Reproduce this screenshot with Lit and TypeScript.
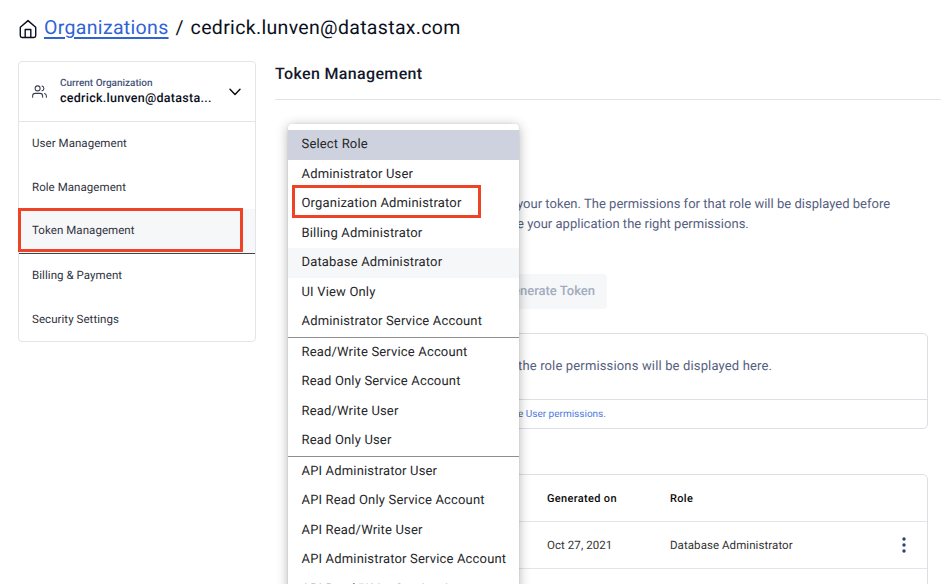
import { LitElement, html, css } from "lit";
import { customElement } from "lit/decorators.js";
import { classMap } from "lit/directives/class-map.js";

@customElement("org-sidebar")
class OrgSidebar extends LitElement {
  static styles = css`
    :host { display: block; width: 238px; flex: none; }
    .card { box-sizing: border-box; width: 238px; height: 281px; border: 1px solid #e2e4e7; border-radius: 4px; }
    .org { display: flex; align-items: center; box-sizing: border-box; height: 60px; padding: 0 13px 0 13px; border-bottom: 1px solid #e2e4e7; }
    .org svg { flex: none; }
    .names { width: 153px; margin: 0 15px 0 13px; white-space: nowrap; }
    .label { font-size: 10px; line-height: 14px; font-weight: 500; letter-spacing: -0.02px; color: #46547a; }
    .name { font-size: 12.5px; line-height: 15px; font-weight: 500; letter-spacing: 0.27px; color: #0a0f20; }
    .item { position: relative; box-sizing: border-box; height: 43.5px; line-height: 43.5px; padding-left: 13px; font-size: 11.5px; letter-spacing: 0.06px; color: #2f3340; }
    .active { height: 45px; background: #f6f7f9; border-bottom: 1.5px solid #43444a; }
    .mark { position: absolute; left: -1px; top: -1px; box-sizing: border-box; width: 225px; height: 44px; border: 3px solid #ee4326; }
  `;
  items = ["User Management", "Role Management", "Token Management", "Billing & Payment", "Security Settings"];
  render() {
    return html`<div class="card">
      <div class="org">
        <svg width="15" height="15" viewBox="0 0 24 24" fill="none" stroke="#3a3f50" stroke-width="1.7" stroke-linecap="round" stroke-linejoin="round">
          <path d="M17 21v-2a4 4 0 0 0-4-4H5a4 4 0 0 0-4 4v2M23 21v-2a4 4 0 0 0-3-3.87M16 3.13a4 4 0 0 1 0 7.75" /><circle cx="9" cy="7" r="4" />
        </svg>
        <div class="names">
          <div class="label">Current Organization</div>
          <div class="name">cedrick.lunven@datasta...</div>
        </div>
        <svg width="14" height="10" viewBox="0 0 14 10" fill="none" stroke="#111" stroke-width="1.5" stroke-linecap="round" stroke-linejoin="round"><path d="M2 2.2 7 7.4l5-5.2" /></svg>
      </div>
      ${this.items.map((t, i) => html`<div class=${classMap({ item: true, active: i === 2 })}>${t}${i === 2 ? html`<div class="mark"></div>` : ""}</div>`)}
    </div>`;
  }
}

@customElement("role-menu")
class RoleMenu extends LitElement {
  static styles = css`
    :host { display: block; box-sizing: border-box; width: 231px; height: 480px; padding-top: 6px; background: #fff; border-radius: 4px; box-shadow: 0 2px 12px rgba(0, 0, 0, 0.3), 0 0 2px rgba(0, 0, 0, 0.1); }
    .item { position: relative; height: 29.5px; line-height: 30.5px; padding-left: 13.5px; font-size: 13px; letter-spacing: 0.17px; color: #26272a; white-space: nowrap; }
    .selected { background: #ced2de; }
    .hover { background: #f6f7f9; }
    .divider { height: 1px; background: #8f8f90; }
    .mark { position: absolute; left: 4px; top: -4px; box-sizing: border-box; width: 189px; height: 33px; border: 3px solid #ee4326; }
  `;
  groups = [
    ["Select Role", "Administrator User", "Organization Administrator", "Billing Administrator", "Database Administrator", "UI View Only", "Administrator Service Account"],
    ["Read/Write Service Account", "Read Only Service Account", "Read/Write User", "Read Only User"],
    ["API Administrator User", "API Read Only Service Account", "API Read/Write User", "API Administrator Service Account", "API Read/Write Service Account"],
  ];
  render() {
    return this.groups.map((g, n) => html`${n ? html`<div class="divider"></div>` : ""}${g.map((t, i) => html`<div
      class=${classMap({ item: true, selected: n === 0 && i === 0, hover: n === 0 && i === 4 })}>${t}${n === 0 && i === 2 ? html`<div class="mark"></div>` : ""}</div>`)}`);
  }
}

@customElement("app-root")
class AppRoot extends LitElement {
  static styles = css`
    :host { display: flex; flex-direction: column; position: relative; width: 950px; height: 584px; overflow: hidden; background: #fff; font-family: Roboto, "Liberation Sans", sans-serif; text-rendering: geometricPrecision; }
    .crumbs { display: flex; align-items: center; height: 61px; box-sizing: border-box; padding: 0 0 6px 19px; font-size: 19.5px; color: #0a0f20; white-space: nowrap; }
    .crumbs svg { margin-top: 2px; }
    .crumbs a { margin-left: 7px; color: #2f63d6; text-decoration: underline; text-underline-offset: 3px; text-decoration-thickness: 1.5px; letter-spacing: 0.33px; }
    .slash { margin: 0 7px; }
    .account { letter-spacing: 0.33px; }
    .body { display: flex; flex: 1; min-height: 0; }
    org-sidebar { margin-left: 18px; }
    main { display: flex; flex-direction: column; width: 666px; margin-left: 19px; }
    h1 { margin: 0; box-sizing: border-box; flex: none; height: 39px; padding-top: 3px; line-height: 20px; font-size: 16px; font-weight: 500; letter-spacing: 0.35px; color: #14192b; border-bottom: 1px solid #e2e4e7; }
    .content { display: flex; flex-direction: column; flex: none; width: 640px; margin-left: 13px; white-space: nowrap; }
    .hint { margin: 95px 0 0; height: 40px; padding-left: 229px; font-size: 13px; line-height: 20px; letter-spacing: 0.02px; color: #566080; }
    .second { display: block; }
    .generate { align-self: flex-start; box-sizing: border-box; margin: 39px 0 0 197px; width: 122px; height: 35px; padding-right: 12px; border-radius: 4px; background: #f6f7f9; color: #a3acbd; font-size: 13px; font-weight: 500; line-height: 36px; text-align: right; }
    .perms { box-sizing: border-box; height: 96px; margin-top: 24px; border: 1px solid #dddee6; border-radius: 5px; color: #566080; }
    .empty { box-sizing: border-box; height: 66px; border-bottom: 1px solid #dddee6; padding-left: 229px; line-height: 65px; font-size: 13px; letter-spacing: 0.15px; }
    .more { padding-left: 229px; font-size: 10px; line-height: 29px; letter-spacing: 0; }
    .more a { color: #4c7be0; }
    .table { margin-top: 45px; border: 1px solid #dbe0e7; border-radius: 5px 5px 0 0; height: 140px; font-size: 11.5px; letter-spacing: 0.07px; color: #333; }
    .row { display: grid; grid-template-columns: 123px 1fr 46px; align-items: center; box-sizing: border-box; height: 47px; padding-left: 258px; border-bottom: 1px solid #e4e5e8; }
    .head { font-weight: 500; color: #0a0a0a; font-size: 11px; letter-spacing: 0.33px; }
    .menu { position: absolute; left: 288px; top: 124px; }
    .dots { justify-self: center; }
  `;
  render() {
    return html`
      <div class="crumbs">
        <svg width="18" height="20" viewBox="0 0 18 20" fill="none" stroke="#0a0f20" stroke-width="1.4" stroke-linejoin="round"><path d="M1.3 8.2 9 1.6l7.7 6.6v8.6a1.7 1.7 0 0 1-1.7 1.7H3a1.7 1.7 0 0 1-1.7-1.7zM6.2 18.5v-8h5.6v8" /></svg>
        <a>Organizations</a><span class="slash">/</span><span class="account">cedrick.lunven@datastax.com</span>
      </div>
      <div class="body">
        <org-sidebar></org-sidebar>
        <main>
          <h1>Token Management</h1>
          <div class="content">
            <p class="hint">your token. The permissions for that role will be displayed before<span class="second">e your application the right permissions.</span></p>
            <div class="generate">Generate Token</div>
            <div class="perms">
              <div class="empty">the role permissions will be displayed here.</div>
              <div class="more">e <a>User permissions.</a></div>
            </div>
            <div class="table">
              <div class="row head"><span>Generated on</span><span>Role</span></div>
              <div class="row"><span>Oct 27, 2021</span><span>Database Administrator</span>
                <svg class="dots" width="6" height="18" viewBox="0 0 6 18" fill="#2e4272"><circle cx="3" cy="3" r="1.7" /><circle cx="3" cy="9" r="1.7" /><circle cx="3" cy="15" r="1.7" /></svg></div>
              <div class="row"></div>
            </div>
          </div>
        </main>
      </div>
      <role-menu class="menu"></role-menu>
    `;
  }
}
